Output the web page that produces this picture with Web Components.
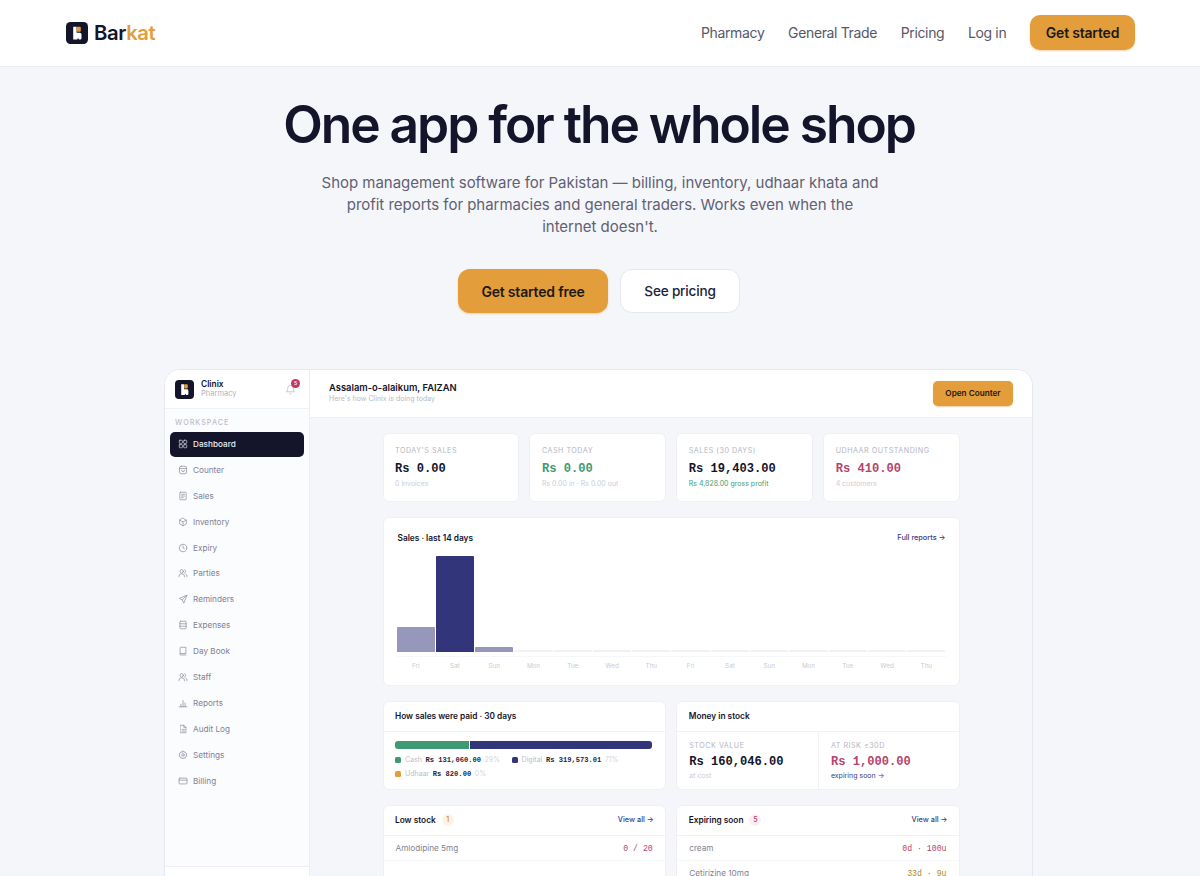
<!doctype html>
<html lang="en"><head><meta charset="utf-8"><title>Barkat</title>
<style>
html,body{margin:0;height:876px;overflow:hidden;background:#f5f6fa;font-family:Inter,"Liberation Sans",sans-serif;color:#14142b}
</style></head><body>
<site-header></site-header>
<hero-block></hero-block>
<dash-window></dash-window>
<script>
const MONO='"Liberation Mono","DejaVu Sans Mono",monospace';
const logo=(s)=>`<svg width="${s}" height="${s}" viewBox="0 0 22 22" style="display:block;flex:none"><rect width="22" height="22" rx="4.500" fill="#14142b"/><path d="M7.200 4.800h3.400v6h3.200q1.700 0 1.700 1.700v3.700q0 1.200-1.200 1.200h-1.300l-.9-1.400-.9 1.400H7.200z" fill="#fff"/><rect x="10.600" y="4.800" width="4.200" height="5" rx="1" fill="#e39d3a"/></svg>`;
function def(name,html,init){customElements.define(name,class extends HTMLElement{connectedCallback(){if(this.shadowRoot)return;const r=this.attachShadow({mode:'open'});r.innerHTML=typeof html==='function'?html(this):html;if(init)init(r,this)}})}

def('site-header',()=>`<style>
:host{display:flex;height:67px;box-sizing:border-box;background:#fff;border-bottom:1px solid #ecedf3;align-items:center;justify-content:space-between;padding:0 65px 1px 66px}
.b{display:flex;align-items:center;gap:6px;font-size:20.300px;font-weight:600;letter-spacing:-.4px}.b i{font-style:normal;color:#e39d3a}
nav{display:flex;align-items:center;gap:23.700px;font-size:14px;letter-spacing:-.36px;color:#55576a;font-weight:400}
a.c{background:#e39d3a;color:#1d1a16;font-weight:600;height:35.500px;border-radius:10px;width:105px;letter-spacing:-.2px;display:flex;align-items:center;justify-content:center;box-shadow:0 1px 2px #d4912f66}
</style><div class="b">${logo(22)}<span>Bar<i>kat</i></span></div><nav><span>Pharmacy</span><span>General Trade</span><span>Pricing</span><span>Log in</span><a class="c">Get started</a></nav>`);

def('hero-block',`<style>
:host{display:flex;flex-direction:column;align-items:center;text-align:center;padding-top:25px}
h1{margin:0 2px 0 0;font-size:51.500px;line-height:64px;font-weight:600;letter-spacing:-2.030px;color:#14142b}
p{margin:16px 0 0;width:560px;font-size:15px;letter-spacing:-.025px;line-height:22px;color:#5f6174}
.a{display:flex;gap:12px;margin:31px 2px 0 0}
.a span{height:44px;box-sizing:border-box;border-radius:12px;display:flex;align-items:center;justify-content:center;font-size:14px;letter-spacing:-.2px;font-weight:600}
.p{width:150px;background:#e39d3a;color:#1d1a16;box-shadow:0 1px 2px #d4912f66}
.s{width:120px;background:#fff;border:1px solid #e6e7ef;color:#20223a;font-weight:500!important;font-size:13.600px!important}
</style><h1>One app for the whole shop</h1><p>Shop management software for Pakistan — billing, inventory, udhaar khata and profit reports for pharmacies and general traders. Works even when the internet doesn't.</p><div class="a"><span class="p">Get started free</span><span class="s">See pricing</span></div>`);

const I={
dash:'<rect x="3" y="3" width="7.500" height="7.500" rx="1.500"/><rect x="13.500" y="3" width="7.500" height="7.500" rx="1.500"/><rect x="3" y="13.500" width="7.500" height="7.500" rx="1.500"/><rect x="13.500" y="13.500" width="7.500" height="7.500" rx="1.500"/>',
counter:'<rect x="3.500" y="3" width="17" height="18" rx="4"/><path d="M3.500 8.500h17M8.500 12.500a3.500 3.500 0 0 0 7 0"/>',
sales:'<rect x="4.500" y="3" width="15" height="18" rx="1.500"/><path d="M8.500 8h7M8.500 12h7M8.500 16h4"/>',
inv:'<path d="M12 3l8 4.500v9L12 21l-8-4.500v-9z"/><path d="M4 7.500l8 4.500 8-4.500M12 12v9"/>',
exp:'<circle cx="12" cy="12" r="9"/><path d="M12 7v5l3.500 2"/>',
users:'<circle cx="9" cy="8" r="4"/><path d="M2.500 21v-1.500A5.500 5.500 0 0 1 8 14h2a5.500 5.500 0 0 1 5.500 5.500V21M16 4.300a4 4 0 0 1 0 7.400M18.500 14.500a5.500 5.500 0 0 1 3 5V21"/>',
send:'<path d="M21 3L3 10.500l7 3.500 3.500 7zM21 3L10 14"/>',
expn:'<rect x="4.500" y="3" width="15" height="18" rx="2"/><path d="M4.500 9h15M4.500 15h15"/>',
book:'<path d="M5 18.500V5a2 2 0 0 1 2-2h12v15H7a2 2 0 0 0-2 2 1.500 1.500 0 0 0 1.500 1.500H19"/>',
rep:'<path d="M3 21h18M7 21v-6M12 21V6M17 21v-9"/>',
audit:'<path d="M6 3h8l5 5v13H6z"/><path d="M14 3v5h5M9.500 13h6M9.500 17h6"/>',
set:'<circle cx="12" cy="12" r="3"/><path d="M12 2.500l2 2.600 3.200-.6.9 3.100 3 1.400-1.200 3 1.200 3-3 1.400-.9 3.100-3.200-.6-2 2.600-2-2.600-3.200.6-.9-3.100-3-1.400 1.200-3-1.200-3 3-1.400.9-3.100 3.200.6z"/>',
card:'<rect x="2.500" y="5" width="19" height="14" rx="2"/><path d="M2.500 10h19"/>'};
const nav=[['Dashboard','dash'],['Counter','counter'],['Sales','sales'],['Inventory','inv'],['Expiry','exp'],['Parties','users'],['Reminders','send'],['Expenses','expn'],['Day Book','book'],['Staff','users'],['Reports','rep'],['Audit Log','audit'],['Settings','set'],['Billing','card']];

def('nav-item',h=>`<style>
:host{display:flex;align-items:center;gap:5.500px;height:25px;margin:0 5px .9px;padding:0 7.500px;border-radius:5px;font-size:8.200px;color:#7f8194;font-weight:400}
:host([on]){background:#14142b;color:#eceef6;font-weight:500}
svg{width:10px;height:10px;fill:none;stroke:currentColor;stroke-width:1.700;flex:none;stroke-linecap:round;stroke-linejoin:round;opacity:.9}
</style><svg viewBox="0 0 24 24">${I[h.getAttribute('i')]}</svg><slot></slot>`);

def('side-bar',()=>`<style>
:host{display:flex;flex-direction:column;width:145px;flex:none;box-sizing:border-box;background:#fbfcfe;border-right:1px solid #eceef4;height:506px}
.t{height:38px;display:flex;align-items:center;gap:7px;padding:0 9px 0 10px;border-bottom:1px solid #f0f1f6;background:#fff;flex:none}
.n{flex:1;line-height:10.500px}.n b{display:block;font-size:8.400px;font-weight:600;color:#14142b}.n small{display:block;font-size:7.500px;color:#b0b2bf}
.bell{position:relative;width:11px;height:11px;color:#b4b6c2;margin-right:4px}
.bell svg{width:11px;height:11px;fill:none;stroke:currentColor;stroke-width:1.600;display:block}
.bell i{position:absolute;right:-4px;top:-5px;width:9px;height:9px;border-radius:50%;background:#c0395f;color:#fff;font:600 5px/9px Inter;text-align:center}
.w{font-size:7.200px;letter-spacing:1px;color:#bcbec9;padding:9px 10px 4.500px;line-height:9px;font-weight:500}
.f{flex:1}.e{height:9px;border-top:1px solid #eceef4;flex:none;background:#fff}
</style><div class="t">${logo(19)}<div class="n"><b>Clinix</b><small>Pharmacy</small></div><div class="bell"><svg viewBox="0 0 24 24"><path d="M6 9a6 6 0 0 1 12 0c0 6 2.500 8 2.500 8h-17S6 15 6 9M10 20.500a2.200 2.200 0 0 0 4 0"/></svg><i>5</i></div></div><div class="w">WORKSPACE</div>${nav.map((n,i)=>`<nav-item i="${n[1]}"${i?'':' on'}>${n[0]}</nav-item>`).join('')}<div class="f"></div><div class="e"></div>`);

def('top-bar',`<style>
:host{display:flex;align-items:center;justify-content:space-between;height:48px;box-sizing:border-box;flex:none;background:#fff;border-bottom:1px solid #eff0f5;padding:0 19px 1px}
b{display:block;font-size:9.400px;font-weight:600;line-height:12.500px;color:#14142b}small{display:block;font-size:7px;line-height:10px;color:#b8bac6}
a{height:25px;width:80px;border-radius:5px;background:#e39d3a;font-size:8.200px;font-weight:600;color:#1d1a16;display:flex;align-items:center;justify-content:center;box-shadow:0 .5px 1px #d4912f66}
</style><div><b>Assalam-o-alaikum, FAIZAN</b><small>Here's how Clinix is doing today</small></div><a>Open Counter</a>`);

def('kpi-card',h=>`<style>
:host{display:block;background:#fff;border:1px solid #eef0f5;border-radius:6px;box-sizing:border-box;height:69px;padding:12px 11.500px 0;min-width:0}
.l{font-size:7.200px;letter-spacing:.5px;color:#b4b6c2;line-height:9px;white-space:nowrap}
.v{font:700 12.100px/15px ${MONO};margin-top:7px;color:${h.getAttribute('c')||'#14142b'};white-space:nowrap}
.s{font-size:7px;line-height:9px;margin-top:2px;color:${h.getAttribute('sc')||'#cbcdd6'};white-space:nowrap}
</style><div class="l">${h.getAttribute('l')}</div><div class="v">${h.getAttribute('v')}</div><div class="s">${h.getAttribute('s')}</div>`);

const hs=[.26,1,.05,.02,.02,.02,.02,.02,.02,.02,.02,.02,.02,.02];
const ds=['Fri','Sat','Sun','Mon','Tue','Wed','Thu','Fri','Sat','Sun','Mon','Tue','Wed','Thu'];
def('chart-card',()=>`<style>
:host{display:block;background:#fff;border:1px solid #eef0f5;border-radius:6px;box-sizing:border-box;height:169px;padding:13px 13px 0 14px}
.h{display:flex;justify-content:space-between;align-items:center;height:13px;color:#14142b;font-size:8.300px;font-weight:600}
.h a{font-size:7.300px;color:#3a3d80;font-weight:500}
.g{display:grid;grid-template-columns:repeat(14,1fr);column-gap:1px;height:96px;margin:12px 0 0 -1px;align-items:end}
.g i{display:block;border-radius:1px 1px 0 0}
.x{display:grid;grid-template-columns:repeat(14,1fr);column-gap:1px;margin:4px 0 0 -1px;padding-top:5px;border-top:1px solid #f6f7fa;font-size:6.300px;line-height:9px;color:#c9cbd4;text-align:center}
</style><div class="h"><span>Sales · last 14 days</span><a>Full reports →</a></div><div class="g">${hs.map((v,i)=>`<i style="height:${v*96}px;background:${i==1?'#32357a':i==0||i==2?'#9697bb':'#f0f1f6'}"></i>`).join('')}</div><div class="x">${ds.map(d=>`<span>${d}</span>`).join('')}</div>`);

def('panel-card',h=>`<style>
:host{display:block;background:#fff;border:1px solid #eef0f5;border-radius:6px;box-sizing:border-box;min-width:0}
.h{display:flex;align-items:center;height:30px;padding:0 11px 2px 11.500px;box-sizing:border-box;border-bottom:1px solid #f1f2f6;font-size:8.300px;font-weight:600;color:#14142b;gap:6px}
.h a{margin-left:auto;font-size:7.300px;font-weight:500;color:#3a3d80}
.h i{font:500 7px/12px Inter;width:12px;height:12px;border-radius:50%;text-align:center;background:${h.getAttribute('bb')||'#fdf3e3'};color:${h.getAttribute('bc')||'#c98a33'}}
</style><div class="h"><span>${h.getAttribute('t')}</span>${h.getAttribute('n')?`<i>${h.getAttribute('n')}</i>`:''}${h.getAttribute('a')?`<a>${h.getAttribute('a')}</a>`:''}</div><slot></slot>`);

def('pay-split',()=>`<style>
:host{display:block;padding:9px 13px 0 11.500px;height:57px;box-sizing:border-box}
.b{display:flex;height:7.500px;gap:1px}.b i{display:block;border-radius:3px 0 0 3px;background:#3f9a72;width:29%}.b u{display:block;flex:1;border-radius:0 3px 3px 0;background:#32357a}
.r{display:flex;flex-wrap:wrap;column-gap:11.500px;margin-top:4.500px;font-size:7px;line-height:14.300px;color:#bcbec9;white-space:nowrap}
.r span{display:flex;align-items:center;gap:3.600px}.r s{width:6px;height:6px;border-radius:1.500px;text-decoration:none;margin-right:.5px}
.r b{font:700 7.100px ${MONO};color:#24263e}.r em{font-style:normal;color:#d3d5dd}
</style><div class="b"><i></i><u></u></div><div class="r"><span><s style="background:#3f9a72"></s>Cash <b>Rs 131,060.00</b> <em>29%</em></span><span><s style="background:#32357a"></s>Digital <b>Rs 319,573.01</b> <em>71%</em></span><span style="width:100%"><s style="background:#e39d3a"></s>Udhaar <b>Rs 820.00</b> <em>0%</em></span></div>`);

def('money-split',()=>`<style>
:host{display:grid;grid-template-columns:1fr 1fr;height:57px}
div.c{padding:9px 12px 0;box-sizing:border-box}div.c+div.c{border-left:1px solid #f1f2f6}
.l{font-size:7.200px;letter-spacing:.5px;color:#b4b6c2;line-height:9px}
.v{font:700 12.100px/15px ${MONO};margin-top:5px}.s{font-size:7px;line-height:9px;margin-top:.5px}
</style><div class="c"><div class="l">STOCK VALUE</div><div class="v" style="color:#14142b">Rs 160,046.00</div><div class="s" style="color:#cbcdd6">at cost</div></div><div class="c"><div class="l">AT RISK ≤30D</div><div class="v" style="color:#b5446a">Rs 1,000.00</div><div class="s" style="color:#3a3d80">expiring soon →</div></div>`);

def('stock-row',h=>`<style>
:host{display:flex;justify-content:space-between;align-items:center;height:24px;padding:0 12px;border-bottom:1px solid #f5f6f9;font-size:8.200px;color:#7f8194}
b{font:400 8.200px ${MONO};white-space:pre}
</style><span>${h.getAttribute('n')}</span><b style="color:${h.getAttribute('c')}">${h.getAttribute('v')}</b>`);

def('dash-window',`<style>
:host{display:flex;width:869px;height:560px;box-sizing:border-box;margin:56px 0 0 164px;background:#f5f6fa;border:1px solid #e6e7ef;border-radius:16px 16px 0 0;overflow:hidden}
.m{flex:1;min-width:0;display:flex;flex-direction:column}
.c{width:577px;margin:15px auto 0;display:flex;flex-direction:column;gap:15px}
.k{display:grid;grid-template-columns:repeat(4,1fr);gap:10.500px}
.two{display:grid;grid-template-columns:1fr 1fr;gap:10.500px}
</style><side-bar></side-bar><div class="m"><top-bar></top-bar><div class="c">
<div class="k"><kpi-card l="TODAY'S SALES" v="Rs 0.00" s="0 invoices"></kpi-card><kpi-card l="CASH TODAY" v="Rs 0.00" c="#3f9a72" s="Rs 0.00 in · Rs 0.00 out"></kpi-card><kpi-card l="SALES (30 DAYS)" v="Rs 19,403.00" s="Rs 4,828.00 gross profit" sc="#3f9a72"></kpi-card><kpi-card l="UDHAAR OUTSTANDING" v="Rs 410.00" c="#b5446a" s="4 customers"></kpi-card></div>
<chart-card></chart-card>
<div class="two"><panel-card t="How sales were paid · 30 days"><pay-split></pay-split></panel-card><panel-card t="Money in stock"><money-split></money-split></panel-card></div>
<div class="two"><panel-card t="Low stock" n="1" a="View all →"><stock-row n="Amlodipine 5mg" v="0 / 20" c="#b5446a"></stock-row></panel-card><panel-card t="Expiring soon" n="5" bb="#fdeef2" bc="#b5446a" a="View all →"><stock-row n="cream" v="0d · 100u" c="#b5446a"></stock-row><stock-row n="Cetirizine 10mg" v="33d · 9u" c="#a8882a"></stock-row></panel-card></div>
</div></div>`);
</script></body></html>
